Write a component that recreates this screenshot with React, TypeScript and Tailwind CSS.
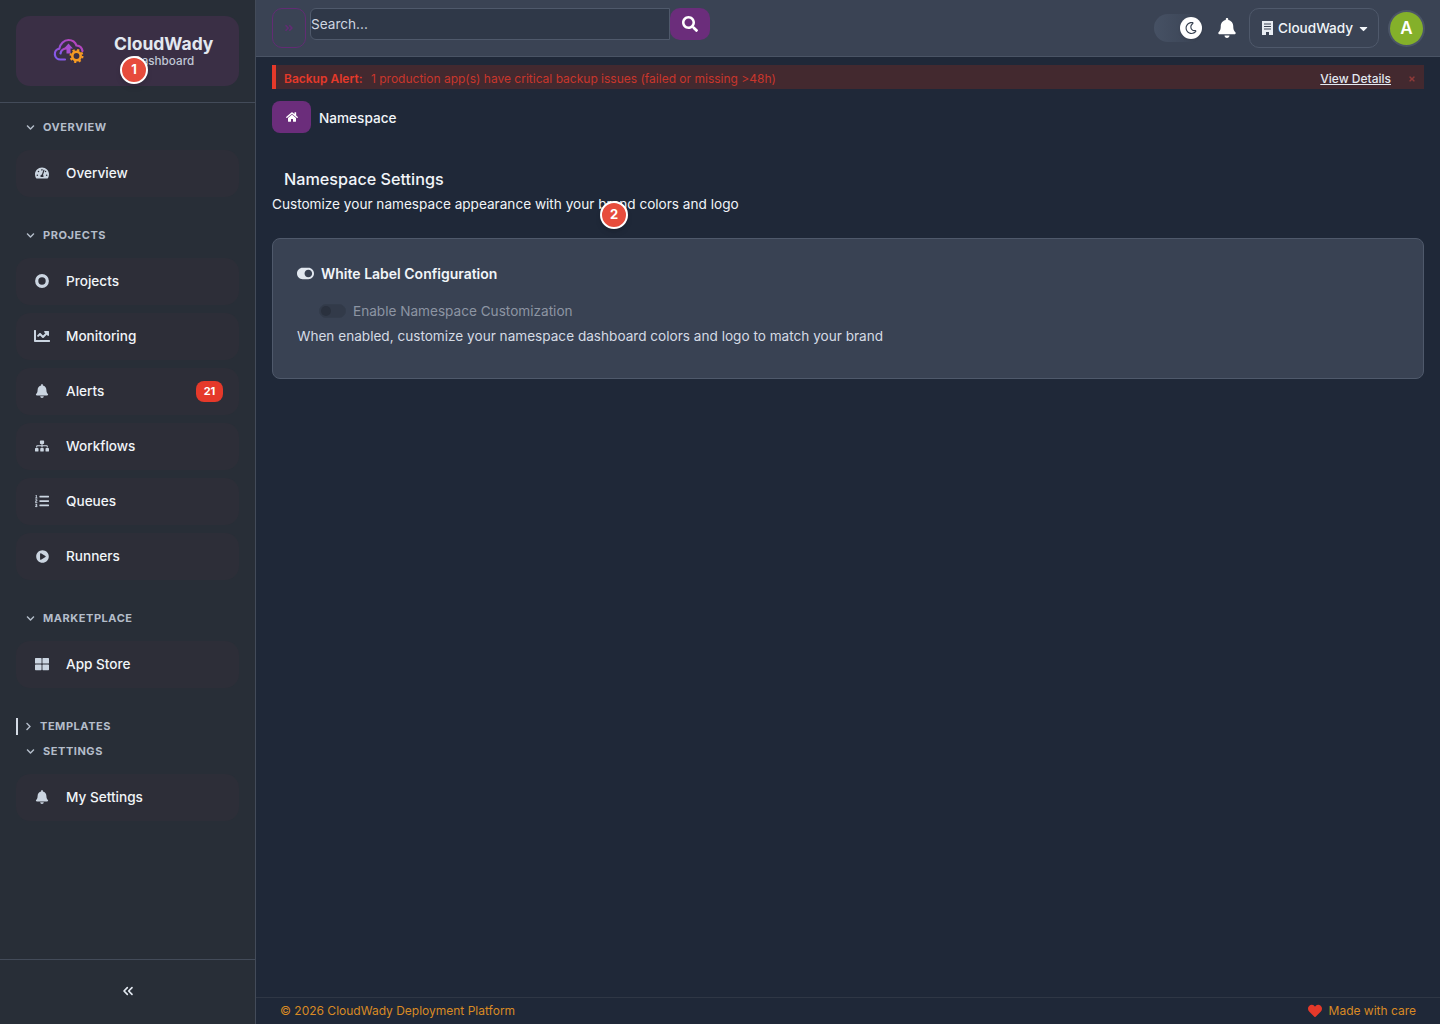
import React from "react";
import {
  FaTachometerAlt, FaHome, FaBell, FaChartLine, FaSitemap, FaListOl, FaPlayCircle, FaThLarge,
  FaToggleOn, FaSearch, FaAngleDoubleRight, FaHeart, FaRegMoon,
  FaChevronDown, FaChevronRight, FaCaretDown, FaTimes,
} from "react-icons/fa";
import { ChevronsLeft } from "lucide-react";

function Ring() {
  return (
    <svg width="14" height="14" viewBox="0 0 14 14">
      <circle cx="7" cy="7" r="5.3" fill="none" stroke="currentColor" strokeWidth="3.200" />
    </svg>
  );
}

function BuildingIcon() {
  return (
    <svg width="11" height="14" viewBox="0 0 11 14" className="mr-[5px] shrink-0">
      <path d="M0 0h11v14H0z" fill="#e8ecf2" />
      <path d="M2 3h7M2 5.500h7M2 8h7" stroke="#3a4354" strokeWidth="1" />
      <path d="M4 11h3v3H4z" fill="#3a4354" />
    </svg>
  );
}

function Logo() {
  return (
    <svg width="32" height="26" viewBox="0 0 32 26" fill="none">
      <defs>
        <linearGradient id="lg" x1="0" y1="1" x2="1" y2="0">
          <stop offset="0" stopColor="#7c5cf0" />
          <stop offset="1" stopColor="#c13fb0" />
        </linearGradient>
      </defs>
      <path d="M12 21.500H7.500a5.500 5.500 0 0 1-1.200-10.900C7.300 5.600 11 2 15.500 2c3.800 0 6.800 2.200 8 5.500 3 .2 5.500 2.500 6 5.500" stroke="url(#lg)" strokeWidth="2.200" strokeLinecap="round" />
      <path d="M7.500 15.500c.5-3 3-5 6.500-5" stroke="url(#lg)" strokeWidth="2.200" strokeLinecap="round" />
      <path d="M15.500 5.500l4.500 5h-2.500v5h-4v-5H11z" fill="#a64fd0" />
      <circle cx="23.500" cy="18" r="4.200" fill="none" stroke="#f59a23" strokeWidth="2.600" />
      <circle cx="23.500" cy="18" r="6" fill="none" stroke="#f59a23" strokeWidth="2" strokeDasharray="2.200 2.500" />
    </svg>
  );
}

function Item({ icon, label, badge }: { icon: React.ReactNode; label: string; badge?: string }) {
  return (
    <div className="flex h-[47px] items-center rounded-[14px] bg-[#2d2e38] pb-[1px] pl-[18px] pr-4">
      <span className="flex w-4 justify-center text-[14px] text-[#cbd5e1]">{icon}</span>
      <span className="ml-4 flex-1 text-[13.6px] font-medium text-[#f1f5f9]">{label}</span>
      {badge && (
        <span className="flex h-[21px] w-[27px] items-center justify-center rounded-[8px] bg-[#e5392a] text-[11px] font-bold text-white">
          {badge}
        </span>
      )}
    </div>
  );
}

function Label({ text }: { text: string }) {
  return (
    <div className="flex h-[26px] items-center pl-[26px] text-[#b4bdca]">
      <FaChevronDown className="text-[9px]" />
      <span className="ml-[8px] text-[11px] font-bold tracking-[0.05em]">{text}</span>
    </div>
  );
}

function Section({ title, children }: { title: string; children: React.ReactNode }) {
  return (
    <div className="mb-[25px]">
      <Label text={title} />
      <div className="mx-4 mt-[10px] flex flex-col gap-2">{children}</div>
    </div>
  );
}

function Pin({ n, className }: { n: string; className: string }) {
  return (
    <span className={`absolute z-10 flex h-[28px] w-[28px] items-center justify-center rounded-full border-2 border-white bg-[#e74c3c] text-[13px] font-bold text-white shadow-md ${className}`}>
      {n}
    </span>
  );
}

export default function App() {
  return (
    <div className="flex h-[1024px] w-[1440px] overflow-hidden bg-[#1f2838] font-['Inter',sans-serif] text-white">
      <aside className="relative flex w-[256px] shrink-0 flex-col border-r border-[#434b59] bg-[#282e37]">
        <div className="h-[103px] shrink-0 border-b border-[#434b59] px-4 pt-4">
          <div className="flex h-[70px] items-center rounded-[14px] bg-[#3a2f45] pl-[37px]">
            <Logo />
            <div className="ml-[29px] flex flex-col items-center pb-[2px]">
              <span className="text-[17.500px] font-bold leading-[22px] text-[#e2e8f0]">CloudWady</span>
              <span className="text-[11.700px] font-medium leading-[13px] text-[#c0c8d6]">Dashboard</span>
            </div>
          </div>
        </div>
        <nav className="flex-1 pt-[11px]">
          <Section title="OVERVIEW">
            <Item icon={<FaTachometerAlt />} label="Overview" />
          </Section>
          <Section title="PROJECTS">
            <Item icon={<Ring />} label="Projects" />
            <Item icon={<FaChartLine className="text-[16px]" />} label="Monitoring" />
            <Item icon={<FaBell />} label="Alerts" badge="21" />
            <Item icon={<FaSitemap />} label="Workflows" />
            <Item icon={<FaListOl />} label="Queues" />
            <Item icon={<FaPlayCircle className="text-[13px]" />} label="Runners" />
          </Section>
          <Section title="MARKETPLACE">
            <Item icon={<FaThLarge />} label="App Store" />
          </Section>
          <div className="-mb-px ml-4 flex h-[26px] items-center text-[#b4bdca]">
            <span className="h-[17px] w-[2px] bg-[#d5dbe5]" />
            <FaChevronRight className="ml-[6px] text-[9px]" />
            <span className="ml-[7px] text-[11px] font-bold tracking-[0.05em]">TEMPLATES</span>
          </div>
          <Section title="SETTINGS">
            <Item icon={<FaBell />} label="My Settings" />
          </Section>
        </nav>
        <div className="flex h-[65px] shrink-0 items-center justify-center border-t border-[#434b59] pb-[2px] text-[#e2e8f0]">
          <ChevronsLeft size={16} strokeWidth={2.5} />
        </div>
        <Pin n="1" className="left-[120px] top-[56px]" />
      </aside>

      <div className="relative flex min-w-0 flex-1 flex-col">
        <header className="flex h-[57px] shrink-0 items-start border-b border-[#4a5465] bg-[#3a4354] pl-4 pr-[17px] pt-2">
          <div className="flex h-[40px] w-[34px] items-center justify-center rounded-[10px] border border-[#622c74] text-[10px] text-[#622c74]">
            <FaAngleDoubleRight />
          </div>
          <div className="ml-[4px] flex h-[32px] w-[360px] items-center rounded-l-[6px] border border-[#4f596b] bg-[#2f3848] pt-[1px] text-[13.6px] text-[#d0d6e0]">
            Search...
          </div>
          <div className="flex h-[32px] w-[40px] items-center justify-center rounded-[10px] bg-[#6b2d7b] text-[16px] text-white">
            <FaSearch />
          </div>
          <div className="flex-1" />
          <div className="mt-[6px] flex h-[28px] w-[48px] items-center justify-end rounded-full bg-gradient-to-r from-[#465164] to-[#3a4354]">
            <span className="flex h-[22px] w-[22px] items-center justify-center rounded-full bg-white text-[12px] text-[#374151] shadow">
              <FaRegMoon />
            </span>
          </div>
          <FaBell className="ml-[15px] mt-[10px] text-[20px] text-white" />
          <div className="ml-[12px] flex h-[40px] w-[130px] items-center rounded-[10px] border border-[#4f596b] pl-3 text-[13.6px] font-medium text-[#f1f5f9]">
            <BuildingIcon />
            CloudWady
            <FaCaretDown className="ml-1 text-[13px]" />
          </div>
          <div className="ml-[11px] mt-[4px] flex h-[33px] w-[33px] items-center justify-center rounded-full bg-[#84b02a] text-[17px] font-semibold text-white ring-2 ring-[#4b5567]">
            A
          </div>
        </header>

        <main className="flex-1 px-4 pt-2">
          <div className="flex h-[24px] items-center border-l-[4px] border-[#e5392a] bg-[#43292f] pl-2 pt-[3px] text-[12px] text-[#c9362c]">
            <span className="font-semibold text-[#e5392a]">Backup Alert:</span>
            <span className="ml-[8.500px] flex-1">1 production app(s) have critical backup issues (failed or missing &gt;48h)</span>
            <span className="font-medium text-[#e2e8f0] underline">View Details</span>
            <FaTimes className="ml-[17px] mr-2 text-[8px] text-[#8f3a38]" />
          </div>
          <div className="mt-[12px] flex items-center">
            <span className="flex h-[32px] w-[39px] items-center justify-center rounded-[8px] bg-[#6b2d7b] text-[12px] text-white">
              <FaHome />
            </span>
            <span className="ml-2 pt-[2px] text-[13.6px] font-medium text-[#f1f5f9]">Namespace</span>
          </div>
          <h1 className="ml-3 mt-[34px] text-[16.200px] font-medium leading-[24px] text-[#f1f5f9]">Namespace Settings</h1>
          <p className="mt-[1px] text-[13.6px] leading-[24px] text-[#f1f5f9]">
            Customize your namespace appearance with your brand colors and logo
          </p>
          <section className="mt-[22px] h-[141px] rounded-[8px] border border-[#4f596b] bg-[#394253] px-6 pt-[24px]">
            <div className="flex h-[20px] items-center text-[14px] font-semibold text-[#f1f5f9]">
              <FaToggleOn className="text-[17px] text-[#e2e8f0]" />
              <span className="ml-[7px]">White Label Configuration</span>
            </div>
            <div className="ml-[22px] mt-[18px] flex h-[20px] items-center text-[13.6px] text-[#8d95a3]">
              <span className="flex h-[14px] w-[27px] items-center rounded-full border border-[#333c4b] bg-[#323a49] pl-[1px]">
                <span className="h-[10px] w-[10px] rounded-full bg-[#2a313e]" />
              </span>
              <span className="ml-[7px]">Enable Namespace Customization</span>
            </div>
            <p className="mt-[5px] text-[13.6px] leading-[20px] text-[#d5dbe5]">
              When enabled, customize your namespace dashboard colors and logo to match your brand
            </p>
          </section>
        </main>

        <footer className="flex h-[27px] shrink-0 items-center justify-between border-t border-[#2f3745] pl-6 pr-6 text-[12px] text-[#d98a24]">
          <span>© 2026 CloudWady Deployment Platform</span>
          <span className="flex items-center">
            <FaHeart className="mr-[7px] text-[14px] text-[#e5392a]" />
            Made with care
          </span>
        </footer>
        <Pin n="2" className="left-[344px] top-[201px]" />
      </div>
    </div>
  );
}
